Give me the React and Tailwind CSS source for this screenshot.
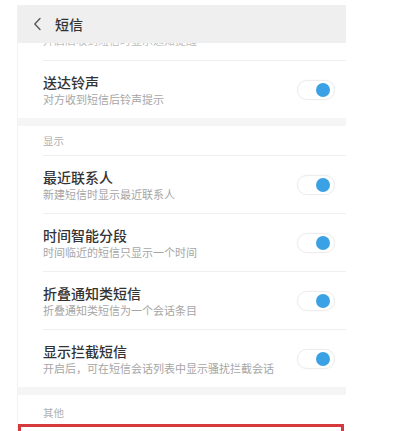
import React from "react";

const font = { fontFamily: '"Noto Sans CJK SC", "Noto Sans", sans-serif' };

function Toggle() {
  return (
    <div className="w-[38px] h-[20px] rounded-full border border-[#ededed] bg-white flex items-center justify-end pr-[4px] shadow-[0_0_2px_rgba(0,0,0,0.05)]">
      <div className="w-[14px] h-[14px] rounded-full bg-[#3aa2e4]" />
    </div>
  );
}

function Row({ title, sub, divider = true }) {
  return (
    <div>
      <div className="flex items-center pl-[25px] pr-[11px]">
        <div className="flex-1 pt-[12px] pb-[12px]">
          <div className="text-[14px] leading-[18px] text-[#333] font-medium">{title}</div>
          <div className="text-[11px] leading-[14px] text-[#a6a6a6] mt-[1px]">{sub}</div>
        </div>
        <Toggle />
      </div>
      {divider && <div className="ml-[25px] h-px bg-[#efefef]" />}
    </div>
  );
}

function SectionHeader({ label, pt = "pt-[9px]" }) {
  return (
    <div className={`h-[29px] ${pt} pl-[25px] text-[10.5px] leading-[12px] text-[#b0b0b0]`}>{label}</div>
  );
}

export default function App() {
  return (
    <div className="w-[394px] h-[431px] bg-white overflow-hidden" style={font}>
      <div className="ml-[17px] mt-[5px] w-[329px] border-l border-[#f2f2f2]">
        <div className="h-[38px] bg-[#efefef] flex items-center pl-[15px]">
          <svg width="9" height="14" viewBox="0 0 9 14" fill="none">
            <polyline points="7,1.5 1.8,7 7,12.5" stroke="#555" strokeWidth="1.3" strokeLinejoin="round" strokeLinecap="round" />
          </svg>
          <span className="ml-[13px] text-[14px] leading-[18px] text-[#333] font-medium">短信</span>
        </div>
        <div className="h-[17px] overflow-hidden pl-[25px]">
          <div className="-mt-[10px] text-[11px] leading-[14px] text-[#bdbdbd]">开启后收到短信时显示通知提醒</div>
        </div>
        <div className="ml-[25px] h-px bg-[#efefef]" />
        <Row title="送达铃声" sub="对方收到短信后铃声提示" divider={false} />
        <div className="h-[8px] bg-[#f5f5f5]" />
        <SectionHeader label="显示" />
        <div className="ml-[25px] h-px bg-[#efefef]" />
        <Row title="最近联系人" sub="新建短信时显示最近联系人" />
        <Row title="时间智能分段" sub="时间临近的短信只显示一个时间" />
        <Row title="折叠通知类短信" sub="折叠通知类短信为一个会话条目" />
        <Row title="显示拦截短信" sub="开启后，可在短信会话列表中显示骚扰拦截会话" divider={false} />
        <div className="h-[8px] bg-[#f5f5f5]" />
        <SectionHeader label="其他" pt="pt-[12px]" />
        <div className="w-[326px] h-[30px] border-[3px] border-[#d5393c] bg-white" />
      </div>
    </div>
  );
}
